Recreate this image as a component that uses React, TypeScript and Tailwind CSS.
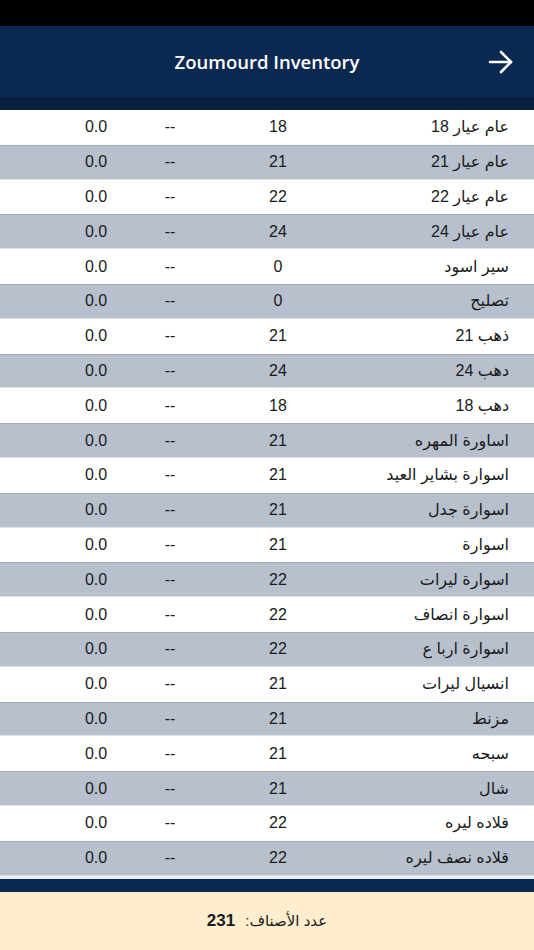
import React from "react";

const rows: [string, string][] = [
  ["عام عيار 18", "18"],
  ["عام عيار 21", "21"],
  ["عام عيار 22", "22"],
  ["عام عيار 24", "24"],
  ["سير اسود", "0"],
  ["تصليح", "0"],
  ["ذهب 21", "21"],
  ["دهب 24", "24"],
  ["دهب 18", "18"],
  ["اساورة المهره", "21"],
  ["اسوارة بشاير العيد", "21"],
  ["اسوارة جدل", "21"],
  ["اسوارة", "21"],
  ["اسوارة ليرات", "22"],
  ["اسوارة انصاف", "22"],
  ["اسوارة اربا ع", "22"],
  ["انسيال ليرات", "21"],
  ["مزنط", "21"],
  ["سبحه", "21"],
  ["شال", "21"],
  ["قلاده ليره", "22"],
  ["قلاده نصف ليره", "22"],
];

export default function App() {
  return (
    <div
      className="w-[534px] h-[950px] flex flex-col overflow-hidden bg-white"
      style={{ fontFamily: '"Liberation Sans", "DejaVu Sans", sans-serif' }}
    >
      <div className="h-[26px] bg-black shrink-0" />
      <div className="h-[72px] bg-[#0b2850] shrink-0 flex items-center relative">
        <div
          className="flex-1 text-center text-white text-[18.5px] font-semibold"
          style={{ fontFamily: '"Open Sans", sans-serif' }}
        >
          Zoumourd Inventory
        </div>
        <div className="absolute right-[20px] top-[23px]">
          <svg width="26" height="26" viewBox="0 0 26 26" fill="none" stroke="white" strokeWidth="2.6" strokeLinecap="round" strokeLinejoin="round">
            <path d="M2 13 H23" />
            <path d="M13 3 L23 13 L13 23" />
          </svg>
        </div>
      </div>
      <div className="h-[12px] bg-[#08203f] shrink-0 border-t border-[#0a1d38]" />
      <div className="flex flex-col shrink-0">
        {rows.map(([name, k], i) => {
          const gray = i % 2 === 1;
          return (
            <div
              key={i}
              className={
                "h-[34.8px] flex items-center text-[16px] text-[#1a1a1a] " +
                (gray
                  ? "bg-[#b8c0cd] border-t border-[#a2aab6] border-b border-b-[#dde1e7]"
                  : "bg-white")
              }
            >
              <div className="w-[48px]" />
              <div className="w-[96px] text-center">0.0</div>
              <div className="w-[52px] text-center">--</div>
              <div className="w-[164px] text-center">{k}</div>
              <div className="flex-1 text-right pr-[25px]" dir="rtl">
                {name}
              </div>
            </div>
          );
        })}
      </div>
      <div className="h-[3px] bg-[#e9ecf0] shrink-0" />
      <div className="h-[13px] bg-[#0b2850] shrink-0" />
      <div className="flex-1 bg-[#ffedcf] flex items-center justify-center text-[#1a1a1a]" dir="rtl">
        <span className="text-[15px]">عدد الأصناف:</span>
        <span className="text-[17px] font-bold mr-[10px]">231</span>
      </div>
    </div>
  );
}
